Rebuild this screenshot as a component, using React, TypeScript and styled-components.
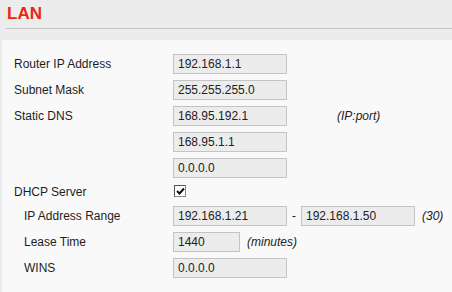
import React from "react";
import styled, { createGlobalStyle } from "styled-components";

const GlobalStyle = createGlobalStyle`
  html, body {
    margin: 0;
    padding: 0;
    background: #ececec;
    font-family: "Liberation Sans", Arial, sans-serif;
    font-size: 12px;
    color: #1e1e1e;
  }
`;

interface Field {
  label: string;
  indent?: boolean;
  value?: string;
  width?: number;
  note?: string;
  noteGap?: number;
  check?: boolean;
  rangeEnd?: string;
}

const fields: Field[] = [
  { label: "Router IP Address", value: "192.168.1.1" },
  { label: "Subnet Mask", value: "255.255.255.0" },
  { label: "Static DNS", value: "168.95.192.1", note: "(IP:port)", noteGap: 50 },
  { label: "", value: "168.95.1.1" },
  { label: "", value: "0.0.0.0" },
  { label: "DHCP Server", check: true },
  {
    label: "IP Address Range",
    indent: true,
    value: "192.168.1.21",
    rangeEnd: "192.168.1.50",
    note: "(30)",
  },
  { label: "Lease Time", indent: true, value: "1440", width: 67, note: "(minutes)" },
  { label: "WINS", indent: true, value: "0.0.0.0" },
];

const App: React.FC = () => {
  return (
    <Page>
      <GlobalStyle />
      <Header>
        <Title>LAN</Title>
      </Header>
      <Panel>
        {fields.map((f, i) => (
          <Row key={i} $short={f.check}>
            <Label $indent={f.indent}>{f.label}</Label>
            {f.check ? (
              <CheckBox>
                <svg width="9" height="9" viewBox="0 0 9 9">
                  <path d="M1 4 L3.5 6.5 L8 1.5" fill="none" stroke="#111" strokeWidth="2" />
                </svg>
              </CheckBox>
            ) : (
              <Input $width={f.width}>{f.value}</Input>
            )}
            {f.rangeEnd && (
              <>
                <Dash>-</Dash>
                <Input>{f.rangeEnd}</Input>
              </>
            )}
            {f.note && <Note $gap={f.noteGap}>{f.note}</Note>}
          </Row>
        ))}
      </Panel>
    </Page>
  );
};

export default App;

const Page = styled.div`
  width: 452px;
  height: 292px;
  overflow: hidden;
  display: flex;
  flex-direction: column;
`;

const Header = styled.div`
  margin-left: 6px;
  height: 29px;
  border-bottom: 1px solid #c6c6c6;
  margin-bottom: 11px;
  box-sizing: border-box;
  display: flex;
  align-items: flex-start;
`;

const Title = styled.h1`
  margin: 4px 0 0 1px;
  font-size: 17px;
  font-weight: bold;
  line-height: 20px;
  color: #e8280f;
`;

const Panel = styled.div`
  flex: 1;
  margin-left: 2px;
  background: #f9f9f9;
  padding: 11px 0 0 12px;
`;

const Row = styled.div<{ $short?: boolean }>`
  display: flex;
  align-items: center;
  height: ${(p) => (p.$short ? 22 : 26)}px;
`;

const Label = styled.div<{ $indent?: boolean }>`
  width: ${(p) => (p.$indent ? 149 : 159)}px;
  padding-left: ${(p) => (p.$indent ? 10 : 0)}px;
  flex-shrink: 0;
`;

const Input = styled.div<{ $width?: number }>`
  box-sizing: border-box;
  width: ${(p) => p.$width ?? 114}px;
  height: 20px;
  line-height: 18px;
  padding-left: 4px;
  background: #ececec;
  border: 1px solid #c4c4c4;
  color: #222;
`;

const CheckBox = styled.span`
  box-sizing: border-box;
  width: 12px;
  height: 12px;
  margin: -2px 0 0 1px;
  background: #fff;
  border: 1px solid #888;
  border-top-color: #555;
  border-left-color: #555;
  display: flex;
  align-items: center;
  justify-content: center;
`;

const Dash = styled.span`
  width: 14px;
  text-align: center;
`;

const Note = styled.span<{ $gap?: number }>`
  margin-left: ${(p) => p.$gap ?? 7}px;
  font-style: italic;
  color: #222;
`;
